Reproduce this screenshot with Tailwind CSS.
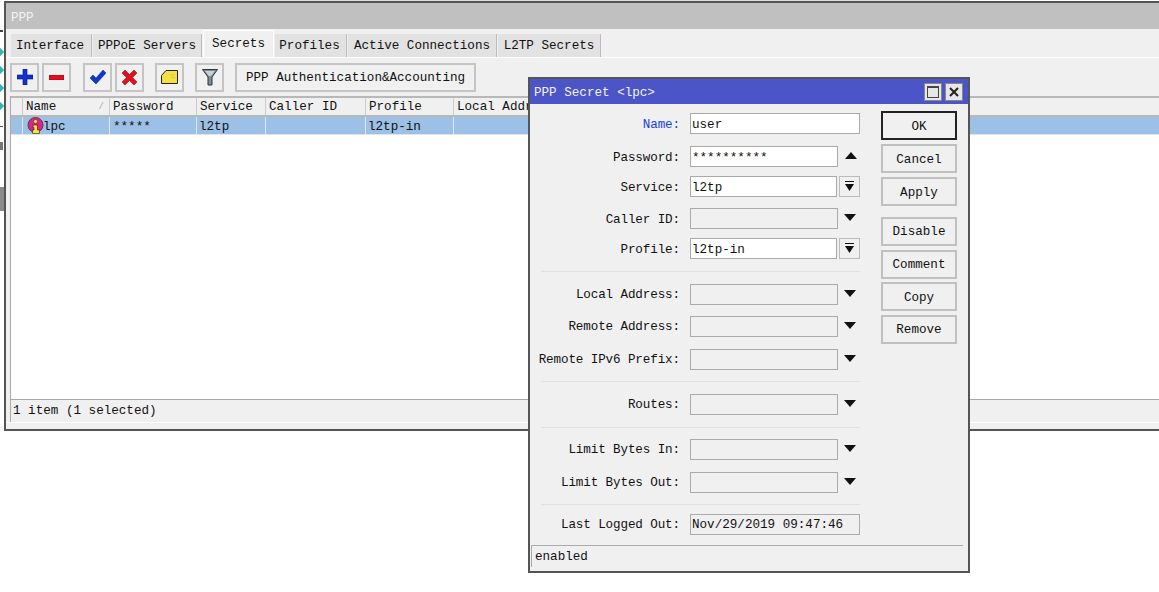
<!DOCTYPE html>
<html lang="en">
<head>
<meta charset="UTF-8">
<title>PPP</title>
<script src="https://cdn.jsdelivr.net/npm/@tailwindcss/browser@4"></script>
</head>
<body class="bg-white">
<div class="relative w-[1159px] h-[592px] overflow-hidden bg-white text-[12.6px] leading-[16px] text-[#111] [font-family:'Liberation_Mono',monospace]">

  <!-- bits of the desktop behind the window -->
  <div class="absolute -left-[3px] top-[49px] w-[6px] h-[6px] bg-[#2fb5b5] rotate-45"></div>
  <div class="absolute -left-[3px] top-[67px] w-[6px] h-[6px] bg-[#2fb5b5] rotate-45"></div>
  <div class="absolute -left-[3px] top-[85px] w-[6px] h-[6px] bg-[#2fb5b5] rotate-45"></div>
  <div class="absolute -left-[3px] top-[103px] w-[6px] h-[6px] bg-[#2fb5b5] rotate-45"></div>
  <div class="absolute left-0 top-[30px] w-[3px] h-[2px] bg-[#444]"></div>
  <div class="absolute left-0 top-[126px] w-[3px] h-[1px] bg-[#555]"></div>
  <div class="absolute left-0 top-[142px] w-[3px] h-[8px] bg-[#777]"></div>
  <div class="absolute left-0 top-[187px] w-[4px] h-[24px] bg-[#8a8a8a]"></div>
  <div class="absolute left-[160px] top-0 w-[800px] h-[1px] bg-[#ddd]"></div>

  <!-- PPP window -->
  <div class="ml-[4px] mt-[1px] h-[430px] flex flex-col border-l-2 border-t-2 border-b-2 border-[#555] bg-[#f0f0f0]">
    <div class="h-[26px] shrink-0 bg-[#c0c0c0] text-[#f4f4f4] pl-[5px] pt-[7px]">PPP</div>

    <!-- tabs -->
    <div class="h-[29px] shrink-0 flex items-end pl-[5px] gap-[1px] border-b border-white">
      <div class="w-[81px] h-[23px] bg-[#e2e2e2] border-r border-[#bbb] flex items-center justify-center pt-[1px] pr-[2px]">Interface</div>
      <div class="w-[109px] h-[23px] bg-[#e2e2e2] border-r border-[#bbb] flex items-center justify-center pt-[1px]">PPPoE Servers</div>
      <div class="w-[71px] h-[27px] bg-[#f0f0f0] border-t border-l border-r border-white flex items-center justify-center pb-[1px]">Secrets</div>
      <div class="w-[72px] h-[23px] bg-[#e2e2e2] border-r border-[#bbb] flex items-center justify-center pt-[1px] pr-[2px]">Profiles</div>
      <div class="w-[149px] h-[23px] bg-[#e2e2e2] border-r border-[#bbb] flex items-center justify-center pt-[1px]">Active Connections</div>
      <div class="w-[103px] h-[23px] bg-[#e2e2e2] border-r border-[#bbb] flex items-center justify-center pt-[1px]">L2TP Secrets</div>
    </div>

    <!-- toolbar -->
    <div class="h-[38px] shrink-0 flex items-center pl-[4px]">
      <button class="w-[29px] h-[29px] border-2 border-[#c4c4c4] flex items-center justify-center">
        <svg width="16" height="16" viewBox="0 0 16 16"><path d="M6 0h4v6h6v4h-6v6H6v-6H0V6h6z" fill="#1030d0" stroke="#001a80" stroke-width=".6"/></svg>
      </button>
      <button class="ml-[3px] w-[29px] h-[29px] border-2 border-[#c4c4c4] flex items-center justify-center">
        <svg width="15" height="5" viewBox="0 0 15 5"><rect width="15" height="5" fill="#e01020" stroke="#800" stroke-width=".6"/></svg>
      </button>
      <button class="ml-[12px] w-[29px] h-[29px] border-2 border-[#c4c4c4] flex items-center justify-center">
        <svg width="16" height="14" viewBox="0 0 16 14"><path d="M0 8l3-3 3 3 7-8 3 3-10 11z" fill="#1038d0" stroke="#001a80" stroke-width=".5"/></svg>
      </button>
      <button class="ml-[3px] w-[29px] h-[29px] border-2 border-[#c4c4c4] flex items-center justify-center">
        <svg width="15" height="15" viewBox="0 0 15 15"><path d="M0 3l3-3 4.500 4.500L12 0l3 3-4.500 4.500L15 12l-3 3-4.500-4.500L3 15l-3-3 4.500-4.500z" fill="#e01020" stroke="#800" stroke-width=".5"/></svg>
      </button>
      <button class="ml-[11px] w-[29px] h-[29px] border-2 border-[#c4c4c4] flex items-center justify-center">
        <svg width="17" height="14" viewBox="0 0 17 14"><path d="M.5 5.500L5 .5h11.500v13H.5z" fill="#f6e040" stroke="#222"/><path d="M9 5h5M10 7.500h4" stroke="#d8c850" stroke-width="1"/></svg>
      </button>
      <button class="ml-[11px] w-[29px] h-[29px] border-2 border-[#c4c4c4] flex items-center justify-center">
        <svg width="16" height="17" viewBox="0 0 16 17"><path d="M.5.500h15L10 8v8H6V8z" fill="#7f8e9a" stroke="#333"/><path d="M3 2h10L9 7H7z" fill="#c8d0d8"/></svg>
      </button>
      <button class="ml-[11px] w-[241px] h-[29px] border-2 border-[#c4c4c4] flex items-center justify-center pt-[2px]">PPP Authentication&amp;Accounting</button>
    </div>

    <!-- list -->
    <div class="flex-1 ml-[4px] flex flex-col border-l border-[#aaa] bg-white min-h-0">
      <div class="h-[21px] shrink-0 flex bg-[#f0f0f0] border-t-2 border-b-2 border-[#b8b8b8] leading-[18px]">
        <div class="w-[12px] border-r border-[#ccc]"></div>
        <div class="w-[87px] border-r border-[#ccc] pl-[3px] flex justify-between pr-[5px]"><span>Name</span><span class="text-[9px] text-[#aaa]">/</span></div>
        <div class="w-[87px] border-r border-[#ccc] pl-[3px]">Password</div>
        <div class="w-[69px] border-r border-[#ccc] pl-[3px]">Service</div>
        <div class="w-[100px] border-r border-[#ccc] pl-[3px]">Caller ID</div>
        <div class="w-[88px] border-r border-[#ccc] pl-[3px]">Profile</div>
        <div class="flex-1 pl-[3px]">Local Address</div>
      </div>
      <div class="h-[18px] shrink-0 flex bg-[#9dc0e6] border-b border-[#e4e4e4] leading-[20px]">
        <div class="w-[12px] border-r border-[#dfe8f2]"></div>
        <div class="w-[87px] border-r border-[#dfe8f2] pl-[4px] flex">
          <svg width="17" height="17" viewBox="0 0 17 17" class="shrink-0"><circle cx="8.500" cy="8" r="7.500" fill="#e0208c" stroke="#444"/><circle cx="8.500" cy="4.500" r="2" fill="#ffe040" stroke="#222" stroke-width=".5"/><path d="M6 8h4.500v5h2v3.500h-7V13h1.500v-2.500H6z" fill="#ffe040" stroke="#222" stroke-width=".6"/></svg>
          <span class="-ml-[1px]">lpc</span>
        </div>
        <div class="w-[87px] border-r border-[#dfe8f2] pl-[3px]">*****</div>
        <div class="w-[69px] border-r border-[#dfe8f2] pl-[2px]">l2tp</div>
        <div class="w-[100px] border-r border-[#dfe8f2]"></div>
        <div class="w-[88px] border-r border-[#dfe8f2] pl-[2px]">l2tp-in</div>
        <div class="flex-1"></div>
      </div>
    </div>

    <!-- window status -->
    <div class="h-[23px] shrink-0 ml-[4px] border-t border-l border-[#aaa] pl-[2px] flex items-center">1 item (1 selected)</div>
    <div class="h-[7px] shrink-0 border-t border-white"></div>
  </div>

  <!-- PPP Secret dialog -->
  <div class="absolute left-[528px] top-[77px] w-[442px] h-[496px] flex flex-col border-2 border-[#555] bg-[#f0f0f0]">
    <div class="h-[25px] shrink-0 bg-[#4c55c7] text-[#f4f4f4] flex items-center pl-[4px] pr-[5px]">
      <span class="flex-1 pt-[2px]">PPP Secret &lt;lpc&gt;</span>
      <div class="w-[18px] h-[18px] bg-[#e6e6e6] border border-[#888] flex items-center justify-center"><div class="w-[12px] h-[12px] border border-[#444] border-t-2"></div></div>
      <div class="ml-[3px] w-[18px] h-[18px] bg-[#e6e6e6] border border-[#888] flex items-center justify-center">
        <svg width="10" height="10" viewBox="0 0 10 10"><path d="M1 1l8 8M9 1l-8 8" stroke="#222" stroke-width="2"/></svg>
      </div>
    </div>

    <div class="flex-1 flex min-h-0">
      <!-- form -->
      <div class="w-[330px] pt-[9px] flex flex-col">
        <div class="h-[21px] flex items-center">
          <label class="w-[150px] text-right tracking-[-0.12px] pt-[3px] text-[#1a3ee0]">Name:</label>
          <div class="ml-[10px] w-[170px] h-[21px] bg-white border border-[#aaa] pl-[1px] leading-[22px]">user</div>
        </div>
        <div class="mt-[12px] h-[21px] flex items-center">
          <label class="w-[150px] text-right tracking-[-0.12px] pt-[3px]">Password:</label>
          <div class="ml-[10px] w-[148px] h-[21px] bg-white border border-[#aaa] pl-[1px] leading-[22px]">**********</div>
          <svg width="12" height="7" viewBox="0 0 12 7" class="ml-[7px] -mt-[2px]"><path d="M6 0l6 7H0z" fill="#111"/></svg>
        </div>
        <div class="mt-[9px] h-[21px] flex items-center">
          <label class="w-[150px] text-right tracking-[-0.12px] pt-[3px]">Service:</label>
          <div class="ml-[10px] w-[147px] h-[21px] bg-white border border-[#aaa] pl-[1px] leading-[22px]">l2tp</div>
          <div class="ml-[2px] w-[21px] h-[21px] border border-[#bbb] flex items-center justify-center">
            <svg width="11" height="11" viewBox="0 0 11 11"><path d="M1 .5h9" stroke="#111"/><path d="M1 3h9L5.500 10z" fill="#111"/></svg>
          </div>
        </div>
        <div class="mt-[11px] h-[21px] flex items-center">
          <label class="w-[150px] text-right tracking-[-0.12px] pt-[3px]">Caller ID:</label>
          <div class="ml-[10px] w-[148px] h-[21px] border border-[#aaa]"></div>
          <svg width="12" height="7" viewBox="0 0 12 7" class="ml-[6px] -mt-[3px]"><path d="M0 0h12L6 7z" fill="#111"/></svg>
        </div>
        <div class="mt-[9px] h-[21px] flex items-center">
          <label class="w-[150px] text-right tracking-[-0.12px] pt-[3px]">Profile:</label>
          <div class="ml-[10px] w-[147px] h-[21px] bg-white border border-[#aaa] pl-[1px] leading-[22px]">l2tp-in</div>
          <div class="ml-[2px] w-[21px] h-[21px] border border-[#bbb] flex items-center justify-center">
            <svg width="11" height="11" viewBox="0 0 11 11"><path d="M1 .5h9" stroke="#111"/><path d="M1 3h9L5.500 10z" fill="#111"/></svg>
          </div>
        </div>
        <div class="mt-[12px] ml-[11px] h-[1px] bg-[#e0e0e0]"></div>

        <div class="mt-[12px] h-[21px] flex items-center">
          <label class="w-[150px] text-right tracking-[-0.12px] pt-[1px]">Local Address:</label>
          <div class="ml-[10px] w-[148px] h-[21px] border border-[#aaa]"></div>
          <svg width="12" height="7" viewBox="0 0 12 7" class="ml-[6px] -mt-[3px]"><path d="M0 0h12L6 7z" fill="#111"/></svg>
        </div>
        <div class="mt-[11px] h-[21px] flex items-center">
          <label class="w-[150px] text-right tracking-[-0.12px] pt-[1px]">Remote Address:</label>
          <div class="ml-[10px] w-[148px] h-[21px] border border-[#aaa]"></div>
          <svg width="12" height="7" viewBox="0 0 12 7" class="ml-[6px] -mt-[3px]"><path d="M0 0h12L6 7z" fill="#111"/></svg>
        </div>
        <div class="mt-[12px] h-[21px] flex items-center">
          <label class="w-[150px] text-right tracking-[-0.12px] pt-[1px]">Remote IPv6 Prefix:</label>
          <div class="ml-[10px] w-[148px] h-[21px] border border-[#aaa]"></div>
          <svg width="12" height="7" viewBox="0 0 12 7" class="ml-[6px] -mt-[3px]"><path d="M0 0h12L6 7z" fill="#111"/></svg>
        </div>
        <div class="mt-[11px] ml-[11px] h-[1px] bg-[#e0e0e0]"></div>

        <div class="mt-[12px] h-[21px] flex items-center">
          <label class="w-[150px] text-right tracking-[-0.12px] pt-[1px]">Routes:</label>
          <div class="ml-[10px] w-[148px] h-[21px] border border-[#aaa]"></div>
          <svg width="12" height="7" viewBox="0 0 12 7" class="ml-[6px] -mt-[3px]"><path d="M0 0h12L6 7z" fill="#111"/></svg>
        </div>
        <div class="mt-[12px] ml-[11px] h-[1px] bg-[#e0e0e0]"></div>

        <div class="mt-[11px] h-[21px] flex items-center">
          <label class="w-[150px] text-right tracking-[-0.12px] pt-[1px]">Limit Bytes In:</label>
          <div class="ml-[10px] w-[148px] h-[21px] border border-[#aaa]"></div>
          <svg width="12" height="7" viewBox="0 0 12 7" class="ml-[6px] -mt-[3px]"><path d="M0 0h12L6 7z" fill="#111"/></svg>
        </div>
        <div class="mt-[12px] h-[21px] flex items-center">
          <label class="w-[150px] text-right tracking-[-0.12px] pt-[1px]">Limit Bytes Out:</label>
          <div class="ml-[10px] w-[148px] h-[21px] border border-[#aaa]"></div>
          <svg width="12" height="7" viewBox="0 0 12 7" class="ml-[6px] -mt-[3px]"><path d="M0 0h12L6 7z" fill="#111"/></svg>
        </div>
        <div class="mt-[11px] ml-[11px] h-[1px] bg-[#e0e0e0]"></div>

        <div class="mt-[9px] h-[21px] flex items-center">
          <label class="w-[150px] text-right tracking-[-0.12px] pt-[1px]">Last Logged Out:</label>
          <div class="ml-[10px] w-[170px] h-[21px] border border-[#aaa] pl-[1px] leading-[21px] whitespace-nowrap">Nov/29/2019 09:47:46</div>
        </div>
      </div>

      <!-- buttons -->
      <div class="ml-[21px] pt-[7px] flex flex-col">
        <button class="w-[76px] h-[29px] border-2 border-[#222] pt-[2px]">OK</button>
        <button class="mt-[4px] w-[76px] h-[29px] border-2 border-[#c0c0c0] pt-[2px]">Cancel</button>
        <button class="mt-[4px] w-[76px] h-[29px] border-2 border-[#c0c0c0] pt-[2px]">Apply</button>
        <button class="mt-[11px] w-[76px] h-[29px] border-2 border-[#c0c0c0] pt-[1px]">Disable</button>
        <button class="mt-[4px] w-[76px] h-[29px] border-2 border-[#c0c0c0] pt-[1px]">Comment</button>
        <button class="mt-[3px] w-[76px] h-[29px] border-2 border-[#c0c0c0] pt-[2px]">Copy</button>
        <button class="mt-[4px] w-[76px] h-[29px] border-2 border-[#c0c0c0] pt-[1px]">Remove</button>
      </div>
    </div>

    <div class="mb-[4px] ml-[1px] mr-[5px] h-[22px] shrink-0 border-t border-l border-[#aaa] pl-[3px] flex items-center">enabled</div>
  </div>
</div>
</body>
</html>
